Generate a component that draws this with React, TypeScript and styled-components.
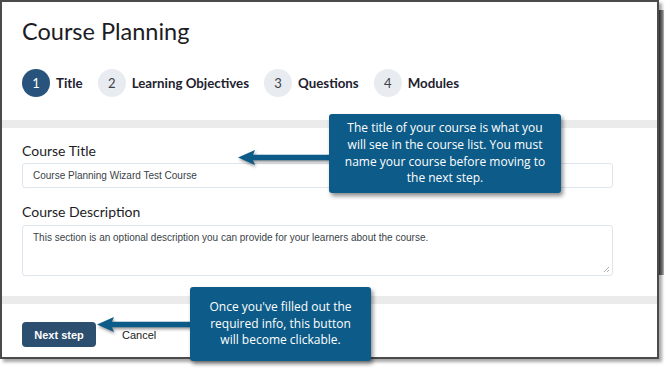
import React from "react";
import styled, { createGlobalStyle } from "styled-components";

const Global = createGlobalStyle`
  html, body { margin: 0; padding: 0; background: #ffffff; }
  body { font-family: "Lato", "Liberation Sans", sans-serif; }
  * { box-sizing: border-box; }
`;

const Page = styled.div`
  position: relative;
  width: 670px;
  height: 370px;
  overflow: hidden;
  background: #fff;
`;

const Frame = styled.div`
  position: relative;
  width: 659px;
  height: 359px;
  border: 2px solid #4b4b4b;
  background: #fff;
  box-shadow: 3px 3px 3px rgba(0, 0, 0, 0.35);
  display: flex;
  flex-direction: column;
  &::after {
    content: "";
    position: absolute;
    right: -7px;
    top: 8px;
    width: 5px;
    height: 265px;
    background: linear-gradient(to right, #2a2a2a, #777 70%, #bbb);
  }
`;

const Header = styled.div`
  padding: 15px 20px 0;
`;

const Title = styled.h1`
  margin: 0;
  font-family: "Lato", sans-serif;
  font-weight: 400;
  font-size: 23.5px;
  line-height: 28px;
  color: #1c1c24;
`;

const Steps = styled.div`
  display: flex;
  align-items: center;
  gap: 15px;
  margin-top: 24px;
  height: 28px;
`;

const Step = styled.div`
  display: flex;
  align-items: center;
  gap: 6px;
`;

const Circle = styled.span<{ $active?: boolean }>`
  width: 28px;
  height: 28px;
  border-radius: 50%;
  display: flex;
  align-items: center;
  justify-content: center;
  font-size: 13px;
  background: ${(p) => (p.$active ? "#28537c" : "#e8ecf0")};
  color: ${(p) => (p.$active ? "#ffffff" : "#3a3f48")};
`;

const StepLabel = styled.span`
  font-size: 13.3px;
  font-weight: 700;
  color: #1e2230;
`;

const Band = styled.div<{ $top: number }>`
  height: 8px;
  margin-top: ${(p) => p.$top}px;
  background: #ebebeb;
`;

const Form = styled.div`
  padding: 0 44px 0 20px;
  display: flex;
  flex-direction: column;
`;

const Label = styled.div<{ $top: number }>`
  margin-top: ${(p) => p.$top}px;
  font-size: 14px;
  line-height: 17px;
  color: #1c1c24;
`;

const Field = styled.div<{ $h: number; $top: number }>`
  position: relative;
  margin-top: ${(p) => p.$top}px;
  height: ${(p) => p.$h}px;
  border: 1px solid #dfe5ec;
  border-radius: 3px;
  padding: ${(p) => (p.$h > 30 ? "6px 10px" : "0 10px")};
  display: flex;
  align-items: ${(p) => (p.$h > 30 ? "flex-start" : "center")};
  font-family: "Liberation Sans", Arial, sans-serif;
  font-size: 10px;
  color: #3a3f48;
`;

const Grip = styled.svg`
  position: absolute;
  right: 2px;
  bottom: 2px;
`;

const Footer = styled.div`
  display: flex;
  align-items: center;
  gap: 26px;
  padding: 18px 20px 0;
`;

const Button = styled.button`
  width: 74px;
  height: 25px;
  border: none;
  border-radius: 4px;
  background: #2c4e6f;
  color: #fff;
  font-family: "Liberation Sans", Arial, sans-serif;
  font-weight: 700;
  font-size: 11px;
`;

const Cancel = styled.span`
  font-family: "Liberation Sans", Arial, sans-serif;
  font-size: 11px;
  color: #222;
`;

const Callout = styled.div<{ $x: number; $y: number; $w: number; $h: number; $pad: number }>`
  position: absolute;
  left: ${(p) => p.$x}px;
  top: ${(p) => p.$y}px;
  width: ${(p) => p.$w}px;
  height: ${(p) => p.$h}px;
  background: #0d5b88;
  border-radius: 3px;
  box-shadow: 2px 3px 4px rgba(0, 0, 0, 0.45);
  color: #fff;
  font-family: "Open Sans", "DejaVu Sans", sans-serif;
  font-size: 12px;
  line-height: 16.7px;
  text-align: center;
  display: flex;
  align-items: center;
  justify-content: center;
  padding: 0 ${(p) => p.$pad}px;
`;

const Arrow = styled.svg<{ $x: number; $y: number }>`
  position: absolute;
  left: ${(p) => p.$x}px;
  top: ${(p) => p.$y}px;
  overflow: visible;
  filter: drop-shadow(1px 2px 1.5px rgba(0, 0, 0, 0.4));
`;

const steps = [
  { n: 1, label: "Title", active: true },
  { n: 2, label: "Learning Objectives" },
  { n: 3, label: "Questions" },
  { n: 4, label: "Modules" },
];

export default function App() {
  return (
    <Page>
      <Global />
      <Frame>
        <Header>
          <Title>Course Planning</Title>
          <Steps>
            {steps.map((s) => (
              <Step key={s.n}>
                <Circle $active={s.active}>{s.n}</Circle>
                <StepLabel>{s.label}</StepLabel>
              </Step>
            ))}
          </Steps>
        </Header>
        <Band $top={23} />
        <Form>
          <Label $top={14}>Course Title</Label>
          <Field $h={25} $top={4}>Course Planning Wizard Test Course</Field>
          <Label $top={15}>Course Description</Label>
          <Field $h={51} $top={5}>
            This section is an optional description you can provide for your learners about the course.
            <Grip width="7" height="7" viewBox="0 0 7 7">
              <path d="M1 6 L6 1 M4 6 L6 4" stroke="#999" strokeWidth="0.8" />
            </Grip>
          </Field>
        </Form>
        <Band $top={20} />
        <Footer>
          <Button>Next step</Button>
          <Cancel>Cancel</Cancel>
        </Footer>
      </Frame>

      <Arrow $x={237} $y={149} width="95" height="17" viewBox="0 0 95 17">
        <path d="M1 8.5 L18 1 L16 5.8 L94 5.8 L94 11.2 L16 11.2 L18 16 Z" fill="#0d5b88" />
      </Arrow>
      <Callout $x={329} $y={114} $w={232} $h={79} $pad={8}>
        The title of your course is what you will see in the course list. You must name your course before moving to the next step.
      </Callout>

      <Arrow $x={96} $y={316} width="96" height="17" viewBox="0 0 96 17">
        <path d="M1 8.5 L18 1 L16 5.8 L95 5.8 L95 11.2 L16 11.2 L18 16 Z" fill="#0d5b88" />
      </Arrow>
      <Callout $x={190} $y={287} $w={181} $h={74} $pad={14}>
        Once you've filled out the required info, this button will become clickable.
      </Callout>
    </Page>
  );
}
